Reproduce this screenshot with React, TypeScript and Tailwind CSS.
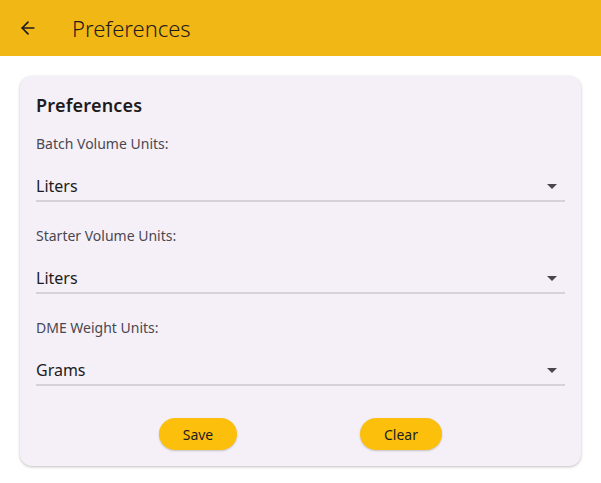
import { ArrowLeft } from 'lucide-react';

const fields = [
    { label: 'Batch Volume Units:', value: 'Liters' },
    { label: 'Starter Volume Units:', value: 'Liters' },
    { label: 'DME Weight Units:', value: 'Grams' },
];

function Dropdown({ label, value, first }: { label: string; value: string; first?: boolean }) {
    return (
        <div className={first ? 'mt-[17px]' : 'mt-[24px]'}>
            <div className="text-[14px] leading-5 text-[#4a4750]">{label}</div>
            <div className="mt-[20px] flex items-start justify-between border-b-2 border-[#d5d1d8] h-[28px]">
                <span className="text-[16px] leading-6 text-[#1d1b20]">{value}</span>
                <svg width="10" height="5" viewBox="0 0 10 5" className="mt-[10px] mr-[8px] fill-[#49454f]">
                    <path d="M0 0h10L5 5z" />
                </svg>
            </div>
        </div>
    );
}

export default function App() {
    return (
        <div className="min-h-screen bg-white font-['Noto_Sans',sans-serif]">
            <header className="h-[56px] bg-[#f1b715] flex items-center px-[18px]">
                <ArrowLeft className="h-[20px] w-[20px] text-[#1d1b20]" strokeWidth={2} />
                <h1 className="ml-[34px] text-[22px] font-light text-[#1d1b20]">Preferences</h1>
            </header>

            <div className="px-[20px] pt-[20px]">
                <div className="bg-[#f5f0f7] rounded-[12px] shadow-[0_1px_3px_rgba(0,0,0,0.25)] px-[16px] pt-[17px] pb-[16px]">
                    <h2 className="text-[18px] leading-6 font-semibold text-[#1d1b20] tracking-[0.2px]">Preferences</h2>
                    {fields.map((f, i) => (
                        <Dropdown key={f.label} label={f.label} value={f.value} first={i === 0} />
                    ))}
                    <div className="flex justify-center gap-[123px] mt-[32px]">
                        <button className="h-[32px] w-[78px] rounded-full bg-[#fcc00c] text-[14px] text-[#1d1b20] shadow-[0_1px_2px_rgba(0,0,0,0.2)]">
                            Save
                        </button>
                        <button className="h-[32px] w-[82px] rounded-full bg-[#fcc00c] text-[14px] text-[#1d1b20] shadow-[0_1px_2px_rgba(0,0,0,0.2)]">
                            Clear
                        </button>
                    </div>
                </div>
            </div>
        </div>
    );
}
